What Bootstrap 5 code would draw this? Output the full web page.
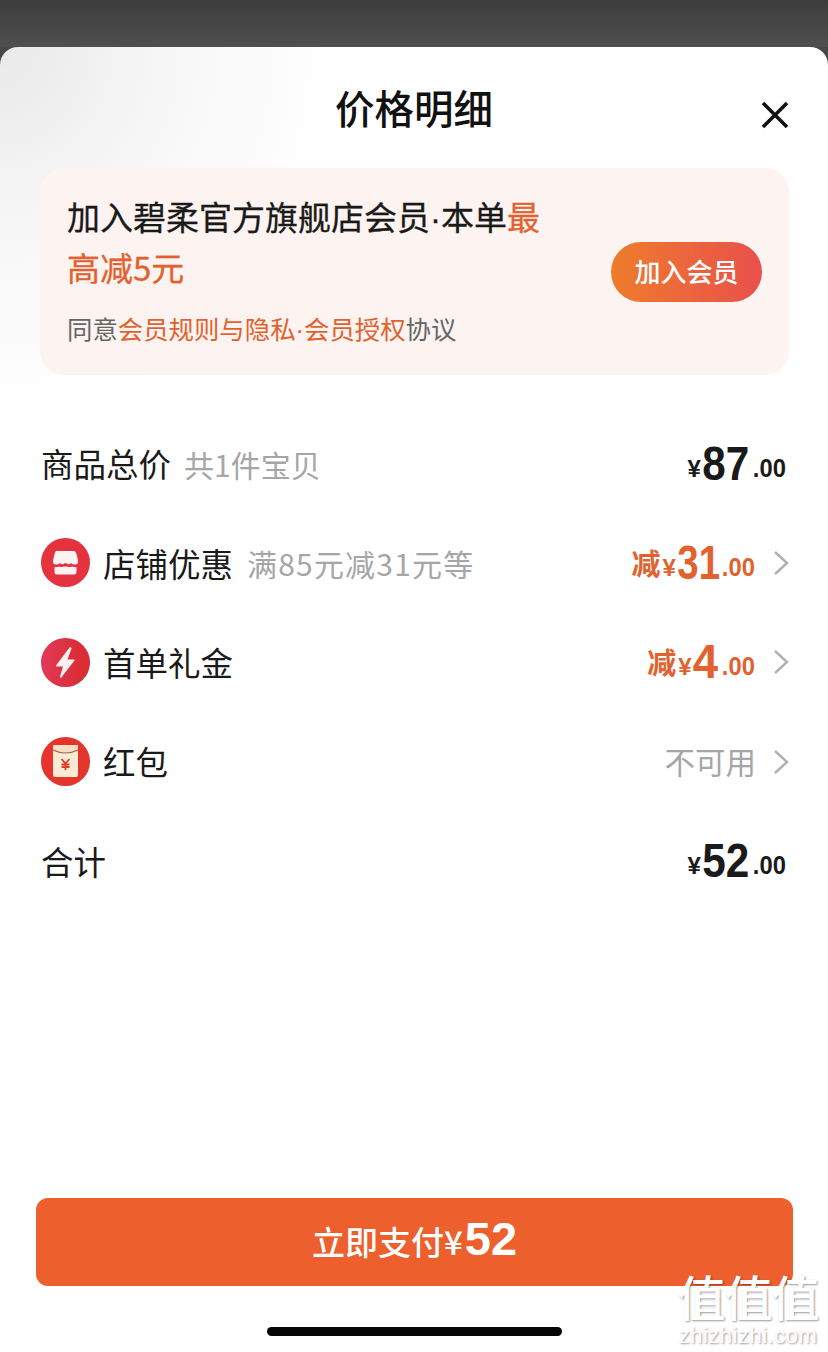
<!DOCTYPE html>
<html lang="zh">
<head>
<meta charset="UTF-8">
<title>价格明细</title>
<link href="https://cdn.jsdelivr.net/npm/bootstrap@5.3.0/dist/css/bootstrap.min.css" rel="stylesheet">
<style>
body { width: 828px; height: 1352px; overflow: hidden; background: #484848; font-family: "Noto Sans CJK SC", "Liberation Sans", sans-serif; color: #1a1a1a; }
.top-dim { height: 47px; background: linear-gradient(#3d3d3d, #4f4f4f); }
.sheet { height: 1305px; border-radius: 18px 18px 0 0; background: #fff radial-gradient(ellipse 340px 370px at 0 0, #e9e9e9 0, #f7f7f7 50%, #fff 100%) no-repeat; position: relative; overflow: hidden; }
.sheet-head { height: 121px; }
.sheet-title { font-size: 39.5px; font-weight: 500; line-height: 1; padding-top: 40px; color: #111; }
.close-x { position: absolute; top: 53px; right: 38px; width: 30px; height: 30px; padding: 0; border: 0; background: none; line-height: 0; }
.promo { margin: 0 39px 0 40px; height: 207px; border-radius: 24px; background: #fdf4f1; padding: 24px 27px 0; }
.promo-text { width: 490px; font-size: 33px; line-height: 49px; white-space: nowrap; -webkit-text-stroke: .3px currentColor; }
.promo-note { font-size: 25.4px; line-height: 36px; color: #666; margin-top: 18px; white-space: nowrap; }
.thin-dot { font-family: "Liberation Sans", sans-serif; }
.hot { color: #e2622f; }
.join-btn { width: 151px; height: 60px; padding: 0 0 3px; border: 0; border-radius: 30px; background: linear-gradient(90deg, #ee7c2c, #e9504c); color: #fff; font-size: 26px; font-weight: 500; margin-top: 50px; flex-shrink: 0; }
.price-list { padding: 39px 38px 0 41px; }
.price-row { height: 99.3px; }
.row-label { font-size: 32.5px; line-height: 1; }
.row-note { font-size: 30px; line-height: 1; color: #a6a6a6; margin-left: 13px; }
.row-note-wide { letter-spacing: 1.2px; margin-left: 14px; }
.row-icon { width: 49px; height: 49px; margin-right: 13px; flex-shrink: 0; display: block; }
.amount { font-family: "Liberation Sans", sans-serif; font-weight: 700; line-height: 1; white-space: nowrap; display: flex; align-items: baseline; }
.amount-cny { font-size: 24px; margin-right: 3px; transform: translateY(-3px); }
.amount-big { font-size: 48px; display: inline-block; transform: scaleX(.88); transform-origin: right baseline; margin-left: -5px; }
.big-narrow { transform: translateX(4px) scaleX(.8); margin-left: -11px; }
.big-solo { transform: translateX(-3px) scaleX(.95); margin-left: 0; }
.amount-tail { font-size: 25px; transform: translateY(-3px) scaleX(.95); }
.amount-cut { font-family: "Noto Sans CJK SC", sans-serif; font-size: 29px; font-weight: 700; margin-right: 2px; transform: translateY(-4px); }
.amount-off { font-size: 30.5px; color: #a6a6a6; line-height: 1; }
.pad-end { margin-right: 3px; }
.chev { width: 16px; height: 26px; margin-left: 17px; margin-right: 1px; display: block; }
.pay-btn { position: absolute; left: 36px; top: 1151px; width: 757px; height: 88px; padding: 0 0 2px; border: 0; border-radius: 12px; background: #ed5f2c; color: #fff; font-size: 33px; font-weight: 500; }
.pay-num { font-family: "Liberation Sans", sans-serif; font-size: 47px; font-weight: 700; line-height: 1; margin-left: 2px; }
.home-bar { position: absolute; left: 267px; top: 1280px; width: 295px; height: 9px; border-radius: 5px; background: #050505; }
.mark-wrap { position: absolute; left: 674px; top: 1222px; width: 148px; color: #fff; text-align: center; text-shadow: 1px 1px 2px rgba(0,0,0,.4); }
.mark-big { font-size: 48px; line-height: 52px; letter-spacing: -1px; white-space: nowrap; font-weight: 500; }
.mark-url { font-family: "Liberation Sans", sans-serif; font-size: 22px; line-height: 22px; margin-top: 4px; letter-spacing: .5px; white-space: nowrap; }
</style>
</head>
<body>
<div class="top-dim"></div>
<div class="sheet">
  <div class="sheet-head">
    <div class="sheet-title text-center">价格明细</div>
    <button class="close-x" type="button" aria-label="关闭">
      <svg width="30" height="30" viewBox="0 0 30 30"><path d="M3 3 L27 27 M27 3 L3 27" stroke="#111" stroke-width="3.6" fill="none"/></svg>
    </button>
  </div>

  <div class="promo d-flex justify-content-between">
    <div>
      <div class="promo-text">加入碧柔官方旗舰店会员<span class="thin-dot">·</span>本单<span class="hot">最</span><br><span class="hot">高减5元</span></div>
      <div class="promo-note">同意<span class="hot">会员规则与隐私<span class="thin-dot">·</span>会员授权</span>协议</div>
    </div>
    <button class="join-btn" type="button">加入会员</button>
  </div>

  <div class="price-list">
    <div class="price-row d-flex align-items-center justify-content-between">
      <div class="d-flex align-items-center">
        <span class="row-label">商品总价</span><span class="row-note">共1件宝贝</span>
      </div>
      <div class="amount pad-end"><span class="amount-cny">¥</span><span class="amount-big">87</span><span class="amount-tail">.00</span></div>
    </div>

    <div class="price-row d-flex align-items-center justify-content-between">
      <div class="d-flex align-items-center">
        <svg class="row-icon" viewBox="0 0 49 49">
          <circle cx="24.5" cy="24.5" r="24.5" fill="#e5323f"/>
          <path d="M15.5 13 H33 Q34.5 13 35 14.5 L37 22 Q37.5 27 33.5 26.5 Q31.5 26.5 30 25 Q28.5 27 26.5 26 Q25 25 24.5 25 Q24 25 22.5 26 Q20.5 27 19 25 Q17.5 26.5 15.5 26.5 Q11.5 27 12 22 L14 14.5 Q14.5 13 15.5 13 Z" fill="#fdf3f1"/>
          <path d="M13.5 29 Q15.5 29.5 18 28.5 Q20 29.5 22 28.8 Q24.5 28 27 28.8 Q29 29.5 31 28.5 Q33.5 29.5 35.5 29 V34 Q35.5 36.5 33 36.5 H16 Q13.5 36.5 13.5 34 Z" fill="#fdf3f1"/>
        </svg>
        <span class="row-label">店铺优惠</span><span class="row-note row-note-wide">满85元减31元等</span>
      </div>
      <div class="d-flex align-items-center">
        <div class="amount hot"><span class="amount-cut">减</span><span class="amount-cny">¥</span><span class="amount-big big-narrow">31</span><span class="amount-tail">.00</span></div>
        <svg class="chev" viewBox="0 0 16 26"><path d="M2 2 L14 13 L2 24" stroke="#b0b0b0" stroke-width="2.4" fill="none"/></svg>
      </div>
    </div>

    <div class="price-row d-flex align-items-center justify-content-between">
      <div class="d-flex align-items-center">
        <svg class="row-icon" viewBox="0 0 49 49">
          <defs><linearGradient id="boltFill" x1="0" x2="1" y1="0" y2="0"><stop offset="0" stop-color="#e13a57"/><stop offset="1" stop-color="#d92a2f"/></linearGradient></defs>
          <circle cx="24.5" cy="24.5" r="24.5" fill="url(#boltFill)"/>
          <path d="M28.5 9.5 L15 27.5 Q14.4 28.6 15.8 28.6 H22 L19 38.5 Q19 40.5 20.5 39.2 L33.5 22.5 Q34 21.5 32.8 21.5 H26.5 L30.5 10.5 Q30.3 8.5 28.5 9.5 Z" fill="#fdf0f0"/>
        </svg>
        <span class="row-label">首单礼金</span>
      </div>
      <div class="d-flex align-items-center">
        <div class="amount hot"><span class="amount-cut">减</span><span class="amount-cny">¥</span><span class="amount-big big-solo">4</span><span class="amount-tail">.00</span></div>
        <svg class="chev" viewBox="0 0 16 26"><path d="M2 2 L14 13 L2 24" stroke="#b0b0b0" stroke-width="2.4" fill="none"/></svg>
      </div>
    </div>

    <div class="price-row d-flex align-items-center justify-content-between">
      <div class="d-flex align-items-center">
        <svg class="row-icon" viewBox="0 0 49 49">
          <circle cx="24.5" cy="24.5" r="24.5" fill="#e4352c"/>
          <rect x="12" y="8" width="25" height="32" rx="2" fill="#fcebd4"/>
          <path d="M12 8 H37 V13 Q24.5 19 12 13 Z" fill="#f7dfc4"/>
          <path d="M12 13 Q24.5 19 37 13" stroke="#a85a44" stroke-width="1.2" fill="none"/>
          <path d="M20.5 22 L24.5 26.5 L28.5 22 M24.5 26.5 V33 M20.5 27.5 H28.5 M20.5 30 H28.5" stroke="#d9402c" stroke-width="1.8" fill="none"/>
        </svg>
        <span class="row-label">红包</span>
      </div>
      <div class="d-flex align-items-center">
        <span class="amount-off">不可用</span>
        <svg class="chev" viewBox="0 0 16 26"><path d="M2 2 L14 13 L2 24" stroke="#b0b0b0" stroke-width="2.4" fill="none"/></svg>
      </div>
    </div>

    <div class="price-row d-flex align-items-center justify-content-between">
      <span class="row-label">合计</span>
      <div class="amount pad-end"><span class="amount-cny">¥</span><span class="amount-big">52</span><span class="amount-tail">.00</span></div>
    </div>
  </div>

  <button class="pay-btn" type="button">立即支付¥<span class="pay-num">52</span></button>
  <div class="home-bar"></div>
  <div class="mark-wrap">
    <div class="mark-big">值值值</div>
    <div class="mark-url">zhizhizhi.com</div>
  </div>
</div>
<script src="https://cdn.jsdelivr.net/npm/bootstrap@5.3.0/dist/js/bootstrap.bundle.min.js"></script>
</body>
</html>
